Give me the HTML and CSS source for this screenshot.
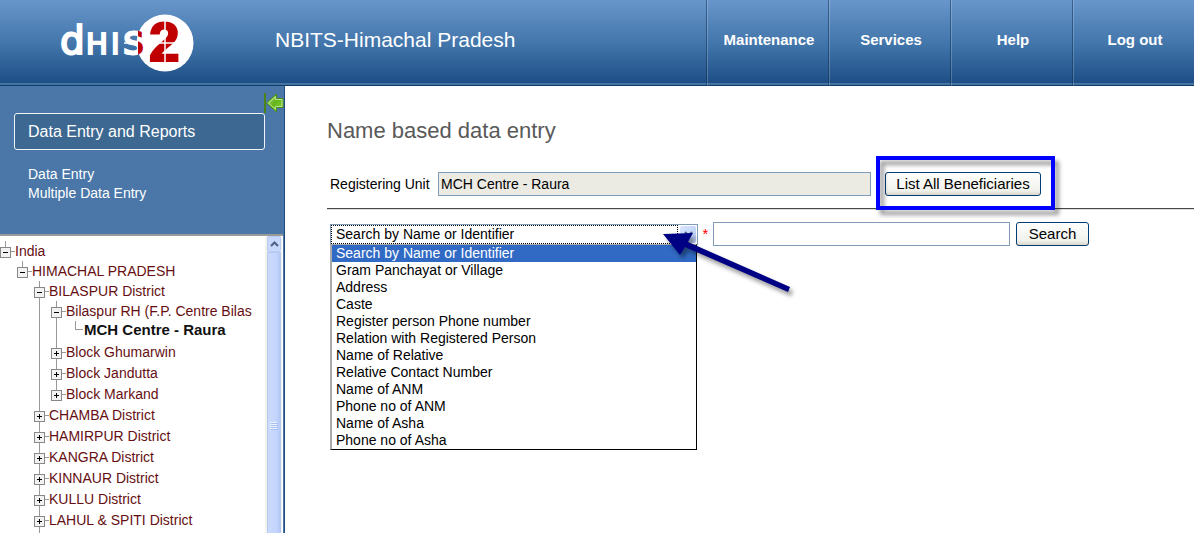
FILE: index.html
```html
<!DOCTYPE html>
<html lang="en">
<head>
<meta charset="utf-8">
<title>NBITS-Himachal Pradesh</title>
<link rel="stylesheet" href="styles.css">
</head>
<body>
<header class="topbar">
  <svg class="logo" viewBox="0 0 138 62" role="img" aria-label="dhis2">
    <defs>
      <linearGradient id="split" gradientUnits="userSpaceOnUse" x1="0" y1="0" x2="138" y2="0">
        <stop offset="0.565" stop-color="#fff"/>
        <stop offset="0.565" stop-color="#c00000"/>
      </linearGradient>
    </defs>
    <circle cx="105" cy="31" r="28.500" fill="#fff"/>
    <g class="wordmark">
      <text x="0" y="42" font-size="39">d</text>
      <text x="26" y="42" font-size="29">H</text>
      <text x="51" y="42" font-size="29">I</text>
      <text x="63" y="42" font-size="40" class="s">s</text>
    </g>
    <text x="89" y="49" class="two">2</text>
    <path d="M105 8V52M88 31H122M64 31H77" stroke="#fff" stroke-width="1.500"/>
  </svg>
  <div class="app-name">NBITS-Himachal Pradesh</div>
  <nav class="main-nav">
    <a href="#">Maintenance</a>
    <a href="#">Services</a>
    <a href="#">Help</a>
    <a href="#">Log out</a>
  </nav>
</header>
<div class="page">
  <aside class="sidebar">
    <div class="collapse-row">
      <button class="collapse" aria-label="Hide menu">
        <svg viewBox="0 0 20 20" width="20" height="20">
          <defs><linearGradient id="leaf" x1="0" y1="0" x2="1" y2="1"><stop offset="0" stop-color="#b5dc8c"/><stop offset="0.500" stop-color="#62b418"/><stop offset="1" stop-color="#8ed84a"/></linearGradient></defs>
          <path d="M1 0V20" stroke="#4a8418" stroke-width="2"/>
          <path d="M2.500 10L12.500 1V5.500H19V14.500H12.500V19Z" fill="url(#leaf)" stroke="#4a8a16"/>
          <path d="M4.500 10L11.500 3.700V6.500H18V13.500H11.500V16.300Z" fill="none" stroke="#b8e68e"/>
        </svg>
      </button>
    </div>
    <h2 class="menu-title">Data Entry and Reports</h2>
    <ul class="menu">
      <li><a href="#">Data Entry</a></li>
      <li><a href="#">Multiple Data Entry</a></li>
    </ul>
    <div class="tree-frame">
      <div class="tree-view">
        <ul class="tree root">
          <li class="stub"><button class="toggle minus" aria-label="Collapse"></button><a href="#">India</a>
            <ul class="tree">
              <li class="stub"><button class="toggle minus" aria-label="Collapse"></button><a href="#">HIMACHAL PRADESH</a>
                <ul class="tree districts">
                  <li><button class="toggle minus" aria-label="Collapse"></button><a href="#">BILASPUR District</a>
                    <ul class="tree">
                      <li><button class="toggle minus" aria-label="Collapse"></button><a href="#">Bilaspur RH (F.P. Centre Bilas</a>
                        <ul class="tree">
                          <li class="leaf"><a href="#" class="selected">MCH Centre - Raura</a></li>
                        </ul>
                      </li>
                      <li class="closed"><button class="toggle" aria-label="Expand"></button><a href="#">Block Ghumarwin</a></li>
                      <li class="closed"><button class="toggle" aria-label="Expand"></button><a href="#">Block Jandutta</a></li>
                      <li class="closed stub"><button class="toggle" aria-label="Expand"></button><a href="#">Block Markand</a></li>
                    </ul>
                  </li>
                  <li class="closed"><button class="toggle" aria-label="Expand"></button><a href="#">CHAMBA District</a></li>
                  <li class="closed"><button class="toggle" aria-label="Expand"></button><a href="#">HAMIRPUR District</a></li>
                  <li class="closed"><button class="toggle" aria-label="Expand"></button><a href="#">KANGRA District</a></li>
                  <li class="closed"><button class="toggle" aria-label="Expand"></button><a href="#">KINNAUR District</a></li>
                  <li class="closed"><button class="toggle" aria-label="Expand"></button><a href="#">KULLU District</a></li>
                  <li class="closed"><button class="toggle" aria-label="Expand"></button><a href="#">LAHUL &amp; SPITI District</a></li>
                </ul>
              </li>
            </ul>
          </li>
        </ul>
      </div>
      <div class="scrollbar">
        <button class="scroll-up" aria-label="Scroll up"><svg viewBox="0 0 9 6" width="9" height="6"><path d="M1 5L4.500 1.500L8 5" fill="none" stroke="#4d6185" stroke-width="2"/></svg></button>
        <div class="thumb"><svg viewBox="0 0 8 8" width="8" height="8"><path d="M0 .5H7M0 2.500H7M0 4.500H7M0 6.500H7" stroke="#eef4fe"/><path d="M1 1.500H8M1 3.500H8M1 5.500H8M1 7.500H8" stroke="#8cb0f8" stroke-opacity=".6"/></svg></div>
      </div>
    </div>
  </aside>
  <main class="content">
    <h1>Name based data entry</h1>
    <form>
      <div class="unit-row">
        <label for="unit">Registering Unit</label>
        <input id="unit" class="field unit" type="text" value="MCH Centre - Raura" readonly>
        <span class="marked"><button type="button" class="btn list-all">List All Beneficiaries</button></span>
      </div>
      <div class="search-row">
        <div class="combo">
          <select aria-label="Search by">
            <option>Search by Name or Identifier</option>
          </select>
          <span class="drop"><svg viewBox="0 0 9 6" width="9" height="6"><path d="M1 1L4.500 4.500L8 1" fill="none" stroke="#4d6185" stroke-width="2"/></svg></span>
          <ul class="options" role="listbox" aria-label="Search by">
            <li role="option" aria-selected="true" class="current">Search by Name or Identifier</li>
            <li role="option">Gram Panchayat or Village</li>
            <li role="option">Address</li>
            <li role="option">Caste</li>
            <li role="option">Register person Phone number</li>
            <li role="option">Relation with Registered Person</li>
            <li role="option">Name of Relative</li>
            <li role="option">Relative Contact Number</li>
            <li role="option">Name of ANM</li>
            <li role="option">Phone no of ANM</li>
            <li role="option">Name of Asha</li>
            <li role="option">Phone no of Asha</li>
          </ul>
          <svg class="pointer" viewBox="0 0 140 70" width="140" height="70" aria-hidden="true">
            <path d="M3 1L33 0L28 9L130 54L128 59L25 14L20 22Z" fill="#000084"/>
          </svg>
        </div>
        <span class="required">*</span>
        <input class="field query" type="text" aria-label="Search text">
        <button type="submit" class="btn search">Search</button>
      </div>
    </form>
  </main>
</div>
</body>
</html>
```
FILE: styles.css
```css
* { box-sizing: border-box; }
body {
  margin: 0;
  height: 100vh;
  display: flex;
  flex-direction: column;
  background: #fff;
  color: #000;
  font: 15px/20px "Liberation Sans", Arial, sans-serif;
}
ul { list-style: none; margin: 0; padding: 0; }
a { text-decoration: none; color: inherit; }
button, input, select { font: inherit; color: inherit; }

.topbar {
  flex: none;
  display: flex;
  align-items: center;
  height: 86px;
  padding-left: 60px;
  color: #fff;
  background: linear-gradient(#6896ca, #4376ab 50%, #1d4f86 83px, #4674a2 83px, #4674a2 85px, #0c3c6e 85px);
}
.logo { width: 138px; height: 62px; flex: none; }
.wordmark { font-family: "DejaVu Sans", sans-serif; fill: #fff; stroke: #fff; stroke-width: 2; }
.wordmark .s { fill: url(#split); stroke: url(#split); }
.two { font-size: 55px; font-weight: bold; fill: #c00000; stroke: #c00000; stroke-width: 2; }
.app-name { flex: 1; padding: 0 0 6px 77px; font-size: 21px; line-height: 24px; }
.main-nav { display: grid; grid-template-columns: repeat(4, 122px); align-self: stretch; }
.main-nav a {
  display: flex;
  align-items: center;
  justify-content: center;
  padding: 0 0 6px 3px;
  font-weight: bold;
  border-left: 1px solid rgba(8, 44, 86, .5);
  box-shadow: inset 1px 0 rgba(255, 255, 255, .2);
}

.page { flex: 1; min-height: 0; display: flex; }
.sidebar {
  flex: none;
  width: 285px;
  display: flex;
  flex-direction: column;
  background: #4a77a8;
  border-right: 1px solid #1c4a7c;
  color: #fff;
}
.collapse-row { display: flex; justify-content: flex-end; height: 27px; padding-top: 7px; }
.collapse { width: 20px; height: 20px; padding: 0; border: 0; background: none; }
.collapse svg { display: block; }
.menu-title {
  margin: 0 19px 0 14px;
  padding: 8px 13px;
  border: 1px solid #f0f3f7;
  border-radius: 3px;
  background: #3c6892;
  font-size: 16px;
  font-weight: normal;
  line-height: 19px;
}
.menu { padding: 15px 28px 31px; font-size: 14px; line-height: 19px; }

.tree-frame {
  flex: 1;
  min-height: 0;
  display: flex;
  margin-right: 1px;
  background: #fff;
  border-top: 2px solid #9a9a98;
}
.tree-view { flex: 1; overflow: hidden; padding-top: 5px; font-size: 14px; color: #660f12; white-space: nowrap; }
.tree .tree { padding-left: 17px; }
.tree li { line-height: 20px; background: linear-gradient(#999, #999) 5px 0 / 1px 100% no-repeat; }
.tree li.closed { line-height: 21px; }
.tree li.stub { background-size: 1px 10px; }
.tree .districts { padding-bottom: 20px; background: linear-gradient(#999, #999) 22px 0 / 1px 100% no-repeat; }
.tree li > a {
  display: inline-block;
  padding-left: 4px;
  background: linear-gradient(#999, #999) 0 50% / 4px 1px no-repeat;
}
.toggle {
  width: 11px;
  height: 11px;
  padding: 0;
  border: 1px solid #888;
  vertical-align: middle;
  background:
    linear-gradient(#000, #000) 2px 4px / 5px 1px no-repeat,
    linear-gradient(#000, #000) 4px 2px / 1px 5px no-repeat,
    #f2f2f2;
}
.toggle.minus { background: linear-gradient(#000, #000) 2px 4px / 5px 1px no-repeat, #f2f2f2; }
.tree li.leaf {
  padding: 0 0 3px 8px;
  line-height: 17px;
  background: linear-gradient(#999, #999) 7px 0 / 1px 9px no-repeat;
}
.tree .leaf > a { padding-left: 8px; background-size: 7px 1px; }
.selected { font-size: 15px; font-weight: bold; color: #111; }

.scrollbar { flex: none; width: 18px; display: flex; flex-direction: column; padding: 0 1px 0 2px; background: #f3f3ee; border-right: 1px solid #fff; }
.scroll-up { height: 16px; padding: 0; border: 1px solid #b9cbf2; border-radius: 2px; background: #c8d8fc; display: grid; place-items: center; }
.thumb { flex: 1; display: grid; place-items: center; padding-top: 66px; background: linear-gradient(90deg, #cbdafe, #c4d5fd 70%, #b4c8f6); border: 1px solid #b4c8f0; border-bottom: 0; }

.content { flex: 1; min-width: 0; padding: 32px 0 0 42px; }
h1 { margin: 0 0 28px; font-size: 22px; font-weight: normal; line-height: 26px; color: #595959; }
.unit-row { display: flex; align-items: center; height: 37px; padding: 0 0 12px 3px; border-bottom: 1px solid #484848; box-shadow: 0 1px #ddd; font-size: 14px; }
.unit-row label { flex: none; width: 108px; white-space: nowrap; }
.field { height: 24px; min-width: 0; padding: 0 2px; border: 1px solid #7f9db9; border-radius: 0; background: #fff; }
.unit { flex: 0 1 433px; background: #ebeae3; }
.btn {
  height: 24px;
  padding: 0;
  border: 1px solid #003c74;
  border-radius: 3px;
  font-size: 15px;
  white-space: nowrap;
  background: linear-gradient(#fff, #f1f1ec 80%, #dad6cb);
}
.marked { position: relative; display: flex; margin-left: 14px; }
.marked::after {
  content: "";
  position: absolute;
  inset: -16px -14px -14px -9px;
  border: 4px solid #00f;
  filter: drop-shadow(4px 5px 2px rgba(0, 0, 0, .4));
  pointer-events: none;
}
.list-all { width: 156px; }
.search-row { display: flex; align-items: center; padding: 13px 0 0 3px; }
.combo { position: relative; display: flex; flex: 0 1 368px; height: 21px; border: 1px solid #7f9db9; font-size: 14px; }
.combo select {
  flex: 1;
  min-width: 0;
  appearance: none;
  padding: 0 4px;
  border: 1px dotted #000;
  border-radius: 0;
  background: #fff;
  line-height: 17px;
}
.drop { display: grid; place-items: center; width: 16px; margin: 1px 1px 1px 2px; border-radius: 2px; background: linear-gradient(135deg, #dbe6fe, #b3c8f6); }
.options {
  position: absolute;
  top: 19px;
  left: -1px;
  right: 0;
  z-index: 1;
  background: #fff;
  border: 1px solid #000;
  border-top-color: #aaa;
  border-left: 2px solid #aaa;
  line-height: 17px;
}
.options li { padding-left: 4px; white-space: nowrap; }
.options .current { background: #316ac5; color: #fff; }
.pointer { position: absolute; top: 8px; left: 329px; z-index: 2; filter: drop-shadow(3px 4px 2px rgba(0, 0, 0, .4)); }
.required { width: 15px; text-align: center; color: #f00; }
.query { flex: 0 1 297px; }
.search { width: 73px; margin-left: 6px; }
```
